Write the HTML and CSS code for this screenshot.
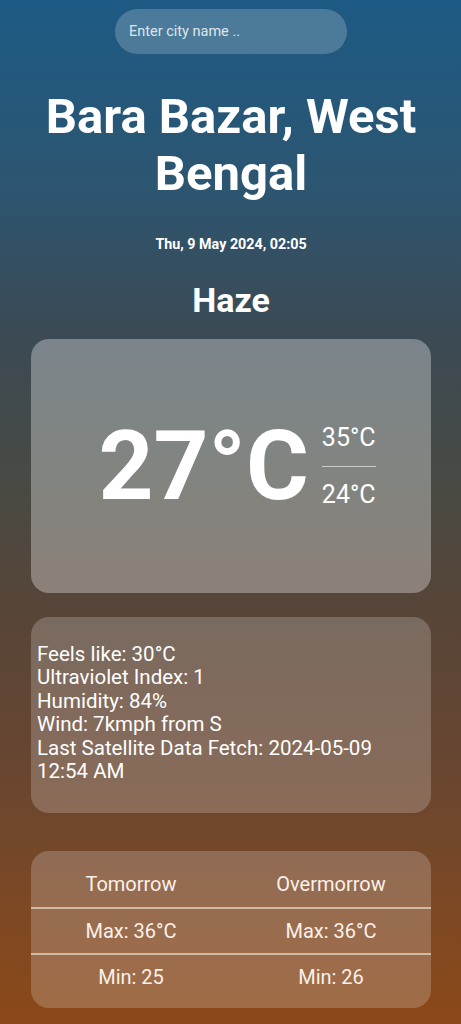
FILE: index.html
```html
<!DOCTYPE html>
<html lang="en">
<head>
<meta charset="utf-8">
<title>Weather</title>
<link rel="stylesheet" href="styles.css">
</head>
<body>
<main class="page">
  <div class="search">
    <input class="search-input" type="text" placeholder="Enter city name ..">
  </div>
  <h1 class="city">Bara Bazar, West Bengal</h1>
  <p class="date">Thu, 9 May 2024, 02:05</p>
  <h2 class="cond">Haze</h2>

  <section class="card card-temp">
    <div class="temp-now">27°C</div>
    <div class="temp-range">
      <span class="temp-hi">35°C</span>
      <span class="temp-div"></span>
      <span class="temp-lo">24°C</span>
    </div>
  </section>

  <section class="card card-info">
    <p>Feels like: 30°C</p>
    <p>Ultraviolet Index: 1</p>
    <p>Humidity: 84%</p>
    <p>Wind: 7kmph from S</p>
    <p>Last Satellite Data Fetch: 2024-05-09 12:54 AM</p>
  </section>

  <section class="card card-forecast">
    <div class="frow">
      <span>Tomorrow</span><span>Overmorrow</span>
    </div>
    <div class="frow">
      <span>Max: 36°C</span><span>Max: 36°C</span>
    </div>
    <div class="frow">
      <span>Min: 25</span><span>Min: 26</span>
    </div>
  </section>
</main>
</body>
</html>
```

FILE: styles.css
```css
* { box-sizing: border-box; }
html, body { margin: 0; padding: 0; }
body {
  min-height: 1024px;
  font-family: Roboto, "Liberation Sans", sans-serif;
  color: #fff;
  background: linear-gradient(to bottom,
    #1d5a84 0px,
    #2c5672 180px,
    #3b4a55 330px,
    #484a44 480px,
    #574538 610px,
    #6a4630 780px,
    #7c4825 900px,
    #8c4818 1024px);
}
.page {
  display: flex;
  flex-direction: column;
  align-items: center;
  padding: 9px 30px 16px 31px;
}
.search { display: flex; justify-content: center; width: 100%; }
.search-input {
  width: 232px;
  height: 45px;
  border: none;
  outline: none;
  border-radius: 23px;
  background: rgba(255, 255, 255, 0.2);
  padding: 0 14px;
  font-family: Roboto, "Liberation Sans", sans-serif;
  font-size: 14.5px;
  color: #fff;
}
.search-input::placeholder { color: rgba(240, 245, 250, 0.9); }
.city {
  margin: 34px 0 0;
  font-size: 49px;
  line-height: 57px;
  font-weight: 700;
  text-align: center;
  width: 410px;
}
.date {
  margin: 34px 0 0;
  font-size: 14.3px;
  font-weight: 700;
  line-height: 16px;
}
.cond {
  margin: 28px 0 0;
  font-size: 34px;
  font-weight: 700;
  line-height: 40px;
}
.card {
  width: 400px;
  border-radius: 18px;
}
.card-temp {
  margin-top: 19px;
  height: 254px;
  background: rgba(255, 255, 255, 0.32);
  display: flex;
  align-items: center;
  justify-content: center;
  gap: 13px;
  padding-left: 12px;
}
.temp-now {
  font-size: 96px;
  font-weight: 700;
  line-height: 1;
}
.temp-range {
  display: flex;
  flex-direction: column;
  align-items: stretch;
  font-size: 25px;
  line-height: 28px;
}
.temp-div {
  display: block;
  height: 1px;
  background: rgba(255, 255, 255, 0.6);
  margin: 14px 0 14px;
}
.card-info {
  margin-top: 24px;
  background: rgba(255, 255, 255, 0.2);
  padding: 26px 30px 30px 6px;
  font-size: 20.5px;
  line-height: 23.4px;
}
.card-info p { margin: 0; }
.card-forecast {
  margin-top: 38px;
  background: rgba(255, 255, 255, 0.2);
  padding: 10px 0 9px;
  color: #fbf1e8;
  font-size: 20px;
}
.frow {
  display: grid;
  grid-template-columns: 1fr 1fr;
  height: 46px;
  align-items: center;
  text-align: center;
}
.frow + .frow { border-top: 2px solid rgba(255, 235, 220, 0.6); }
```
